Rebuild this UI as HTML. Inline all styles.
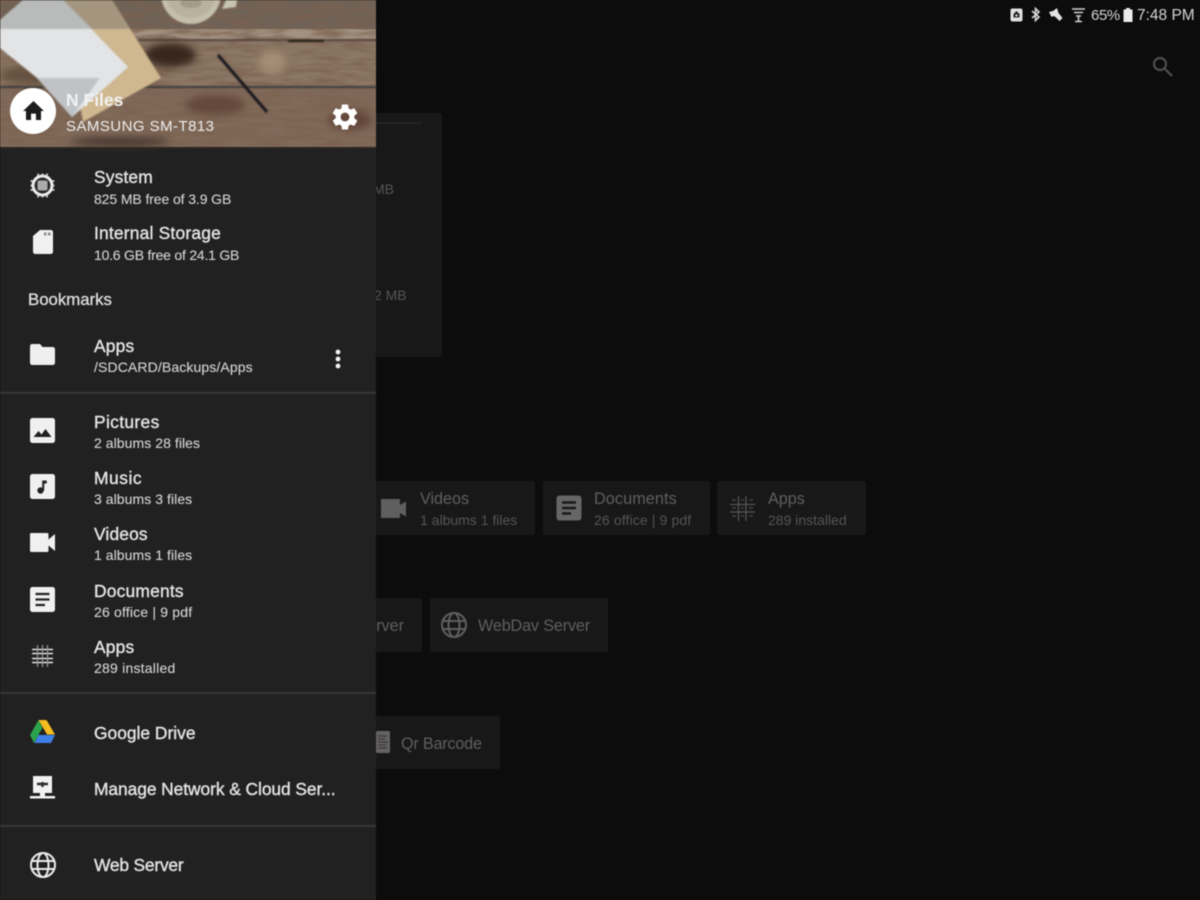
<!DOCTYPE html>
<html><head><meta charset="utf-8">
<style>
html,body{margin:0;padding:0;width:1200px;height:900px;overflow:hidden;background:#0c0c0c;font-family:"Liberation Sans",sans-serif}
#root{position:absolute;left:0;top:0;width:1200px;height:900px;filter:blur(.55px)}
.abs{position:absolute}
.card{position:absolute;background:#181818;border-radius:2px}
.dt{position:absolute;color:#5f5f5f;white-space:nowrap;font-size:16.2px;letter-spacing:-.02px}
.ds{position:absolute;color:#555;white-space:nowrap;font-size:14px}
#drawer{position:absolute;left:0;top:0;width:376px;height:900px;background:#212121;overflow:hidden}
.t{position:absolute;left:94px;color:#e4e4e4;font-size:17.4px;white-space:nowrap;font-weight:400;-webkit-text-stroke:.38px #e4e4e4}
.s{position:absolute;left:94px;color:#d4d4d4;font-size:14px;white-space:nowrap;-webkit-text-stroke:.12px #d4d4d4}
.hr{position:absolute;left:0;width:376px;height:2px;background:#373737}
svg{position:absolute;overflow:visible}
</style></head><body>
<div id="root">

<!-- background content -->
<div class="card" style="left:360px;top:113px;width:82px;height:244px"></div>
<div class="abs" style="left:376px;top:122px;width:46px;height:2px;background:#252525"></div>
<div class="dt" style="left:373px;top:181px;font-size:14px;color:#565656">MB</div>
<div class="dt" style="left:374px;top:287px;font-size:14px;color:#565656">2 MB</div>

<div class="card" style="left:360px;top:481px;width:175px;height:54px"></div>
<div class="card" style="left:543px;top:481px;width:167px;height:54px"></div>
<div class="card" style="left:717px;top:481px;width:149px;height:54px"></div>
<svg style="left:380px;top:498px" width="28" height="22" viewBox="0 0 28 22"><path d="M1 1h19v6l6-3.500v15l-6-3.500v5H1z" fill="#5f5f5f"/></svg>
<div class="dt" style="left:420px;top:490px">Videos</div>
<div class="ds" style="left:420px;top:512px">1 albums 1 files</div>
<svg style="left:556px;top:495px" width="26" height="26" viewBox="0 0 26 26"><rect x="0.500" y="0.500" width="25" height="25" rx="3" fill="#666"/><path d="M6 7.500h14M6 13h14M6 18.500h9" stroke="#191919" stroke-width="2.400"/></svg>
<div class="dt" style="left:594px;top:490px;letter-spacing:.1px">Documents</div>
<div class="ds" style="left:594px;top:512px;letter-spacing:.12px">26 office | 9 pdf</div>
<svg style="left:730px;top:496px" width="25" height="25" viewBox="0 0 25 25" stroke="#555" stroke-width="1.300" fill="none"><path d="M8.500 0v25M16 0v25M0 8.500h25M0 16h25"/><path d="M2 4h4M11 4h3M19 4h4M2 12h4M11 12h3M19 12h4M2 20h4M11 20h3M19 20h4" stroke-width="1.600" stroke="#444"/></svg>
<div class="dt" style="left:768px;top:490px">Apps</div>
<div class="ds" style="left:768px;top:512px">289 installed</div>

<div class="card" style="left:360px;top:598px;width:62px;height:54px"></div>
<div class="card" style="left:430px;top:598px;width:178px;height:54px"></div>
<div class="dt" style="left:376px;top:617px;width:28px;overflow:hidden;direction:rtl">rver</div>
<svg style="left:441px;top:612px" width="26" height="26" viewBox="0 0 26 26" fill="none" stroke="#5f5f5f" stroke-width="2"><circle cx="13" cy="13" r="12"/><ellipse cx="13" cy="13" rx="5.500" ry="12"/><path d="M2 9h22M2 17h22"/></svg>
<div class="dt" style="left:478px;top:617px;letter-spacing:-.15px">WebDav Server</div>

<div class="card" style="left:360px;top:716px;width:140px;height:53px"></div>
<svg style="left:376px;top:731px" width="14" height="22" viewBox="0 0 14 22"><rect width="14" height="22" rx="1.500" fill="#636363"/><path d="M2 5h9M2 8h7M2 11h10M2 14h8M2 17h9" stroke="#443c3c" stroke-width="1.500"/></svg>
<div class="dt" style="left:401px;top:735px;letter-spacing:-.2px">Qr Barcode</div>

<!-- status bar -->
<svg style="left:1010px;top:8px" width="14" height="14" viewBox="0 0 14 14"><rect x="0.500" y="0.500" width="12" height="13" rx="2" fill="#e0e0e0"/><path d="M6.500 3l3 3v3.500h-6V6z" fill="#222"/><rect x="5.500" y="6.500" width="2" height="2" fill="#e0e0e0"/></svg>
<svg style="left:1030px;top:7px" width="12" height="15" viewBox="0 0 12 15" fill="none" stroke="#d8d8d8" stroke-width="1.600"><path d="M2 4l7 6-3.500 3.500v-12L9 5l-7 6"/></svg>
<svg style="left:1048px;top:7px" width="16" height="15" viewBox="0 0 16 15"><path d="M1 5l4-1 4-3 1.500 5 4 5-3 3-4-4-2-1-2 1z" fill="#e2e2e2"/></svg>
<svg style="left:1071px;top:7px" width="15" height="16" viewBox="0 0 15 16" fill="none" stroke="#cfcfcf" stroke-width="1.500"><path d="M1 2h13M3 5.500h9M5 9h5"/><path d="M7.500 9v5M4 14.500h7"/></svg>
<div class="abs" style="left:1091px;top:7px;color:#d4d4d4;font-size:15px;white-space:nowrap;letter-spacing:-.4px">65%</div>
<svg style="left:1123px;top:8px" width="10" height="14" viewBox="0 0 10 14"><path d="M3 0h4v1.500h2.500V14H.5V1.500H3z" fill="#ececec"/></svg>
<div class="abs" style="left:1137px;top:7px;color:#d4d4d4;font-size:15.500px;white-space:nowrap">7:48 PM</div>
<svg style="left:1152px;top:56px" width="21" height="21" viewBox="0 0 21 21" fill="none" stroke="#4f4f4f" stroke-width="2.200"><circle cx="8" cy="8" r="6"/><path d="M12.500 12.500l7.500 7.500"/></svg>

<!-- drawer -->
<div id="drawer">
  <!-- header image -->
  <svg style="left:0;top:0" width="376" height="149" viewBox="0 0 376 149">
    <defs>
      <filter id="b" x="-10%" y="-10%" width="120%" height="120%"><feGaussianBlur stdDeviation=".8"/></filter>
      <filter id="b4" x="-30%" y="-30%" width="160%" height="160%"><feGaussianBlur stdDeviation="4"/></filter>
      <filter id="n" x="0" y="0" width="100%" height="100%"><feTurbulence type="fractalNoise" baseFrequency=".035 .22" numOctaves="4" seed="4"/><feColorMatrix values="0 0 0 0 .2  0 0 0 0 .12  0 0 0 0 .08  2.200 0 0 0 -.75"/></filter>
    </defs>
    <rect width="376" height="149" fill="#7f6a59"/>
    <rect y="0" width="376" height="29" fill="#6f6256"/>
    <rect y="29" width="376" height="11" fill="#a39280"/>
    <rect y="40" width="376" height="47" fill="#8c7866"/>
    <rect y="88" width="376" height="61" fill="#806a59"/>
    <rect width="376" height="149" filter="url(#n)" opacity=".85"/>
    <g filter="url(#b4)">
      <ellipse cx="170" cy="55" rx="26" ry="12" fill="#38251c"/>
      <ellipse cx="272" cy="62" rx="14" ry="12" fill="#a38e74"/>
      <ellipse cx="40" cy="75" rx="40" ry="10" fill="#66513f"/>
      <ellipse cx="215" cy="105" rx="30" ry="10" fill="#654a3b"/>
      <ellipse cx="350" cy="120" rx="22" ry="10" fill="#62473a"/>
      <ellipse cx="120" cy="142" rx="50" ry="5" fill="#4a3931"/>
    </g>
    <g filter="url(#b)">
      <path d="M135 40H376" stroke="#42332a" stroke-width="1.500"/>
      <path d="M288 41h36" stroke="#241a15" stroke-width="2"/>
      <path d="M0 87H376" stroke="#3b3a3a" stroke-width="2"/>
      <path d="M62 0H112L161 78 83 122z" fill="#cfb88f"/>
      <path d="M62 0H112L130 29H88z" fill="#a4957f"/>
      <path d="M0 20L23 0H63L128 67 72 117 37 78 0 48z" fill="#e2e4e6"/>
      <path d="M0 20L23 0H63L92 29H0z" fill="#b8bbb9"/>
      <path d="M37 78H100L72 117z" fill="#c0c3c6"/>
      <path d="M218 55L267 112" stroke="#15161a" stroke-width="3"/>
      <path d="M226 0H237L236 7 222 9z" fill="#c9c5b4"/>
      <circle cx="191" cy="-6" r="30" fill="#c4bfaa"/>
      <circle cx="191" cy="-7" r="25" fill="#b9b29c"/>
      <ellipse cx="191" cy="3" rx="11" ry="5" fill="#a39c87"/>
    </g>
    <rect y="147" width="376" height="2" fill="#2a2622"/>
  </svg>
  <div class="abs" style="left:10px;top:88px;width:46px;height:46px;border-radius:50%;background:#fff"></div>
  <svg style="left:23px;top:101px" width="21" height="19" viewBox="0 0 23 21"><path d="M11.500 0L23 11h-3.200v10h-5.600v-7H8.800v7H3.200V11H0z" fill="#1c1c1c"/></svg>
  <div class="abs" style="left:66px;top:90px;color:#f2f2f2;font-size:17.500px;font-weight:700;white-space:nowrap">N Files</div>
  <div class="abs" style="left:66px;top:118px;color:#eee;font-size:15px;white-space:nowrap;letter-spacing:.45px">SAMSUNG SM-T813</div>
  <svg style="left:330px;top:102px" width="30" height="30" viewBox="0 0 24 24"><path fill="#fff" fill-rule="evenodd" d="M19.430 12.980c.04-.32.070-.64.070-.98s-.03-.66-.07-.98l2.110-1.650c.19-.15.240-.42.120-.64l-2-3.460c-.12-.22-.39-.30-.61-.22l-2.490 1c-.52-.40-1.080-.73-1.690-.98l-.38-2.650C14.460 2.180 14.250 2 14 2h-4c-.25 0-.46.180-.49.420l-.38 2.650c-.61.250-1.170.590-1.690.980l-2.490-1c-.23-.090-.49 0-.61.220l-2 3.460c-.13.220-.07.490.12.640l2.110 1.650c-.04.320-.07.650-.07.980s.03.660.07.980l-2.110 1.650c-.19.150-.24.420-.12.640l2 3.460c.12.220.39.300.61.220l2.490-1c.52.400 1.080.730 1.690.980l.38 2.650c.03.240.24.420.49.420h4c.25 0 .46-.18.490-.42l.38-2.650c.61-.25 1.170-.59 1.690-.98l2.490 1c.23.090.49 0 .61-.22l2-3.460c.12-.22.07-.49-.12-.64l-2.110-1.650zM12 15.500c-1.930 0-3.500-1.570-3.500-3.500s1.570-3.500 3.500-3.500 3.500 1.570 3.500 3.500-1.570 3.500-3.500 3.500z"/></svg>

  <!-- System -->
  <svg style="left:30px;top:173px" width="25" height="25" viewBox="0 0 25 25"><circle cx="12.500" cy="12.500" r="9.500" fill="#2a2a2a" stroke="#ececec" stroke-width="3"/><rect x="7.500" y="7.500" width="10" height="10" rx="2" fill="#ababab"/><path d="M8 0.500v3M12.500 0.500v3M17 0.500v3M8 21.500v3M12.500 21.500v3M17 21.500v3M0.500 8h3M0.500 12.500h3M0.500 17h3M21.500 8h3M21.500 12.500h3M21.500 17h3" stroke="#e0e0e0" stroke-width="1.500"/></svg>
  <div class="t" style="top:167px;letter-spacing:.15px">System</div>
  <div class="s" style="top:191px;letter-spacing:-.1px">825 MB free of 3.9 GB</div>

  <!-- Internal Storage -->
  <svg style="left:33px;top:230px" width="20" height="24" viewBox="0 0 20 24"><path d="M7 0H17.500Q20 0 20 2.500V21.500Q20 24 17.500 24H2.500Q0 24 0 21.500V6z" fill="#f0f0f0"/><path d="M11 2.500h2.500v3H11zM15 2.500h2.500v3H15z" fill="#8a8a8a"/></svg>
  <div class="t" style="top:223px;letter-spacing:.2px">Internal Storage</div>
  <div class="s" style="top:247px;letter-spacing:-.22px">10.6 GB free of 24.1 GB</div>

  <div class="abs" style="left:28px;top:290px;color:#e2e2e2;font-size:16.800px;white-space:nowrap;-webkit-text-stroke:.25px #e2e2e2">Bookmarks</div>

  <!-- Apps bookmark -->
  <svg style="left:30px;top:344px" width="25" height="21" viewBox="0 0 25 21"><path d="M2.500 0H10l2.500 3H22.500Q25 3 25 5.500V18.500Q25 21 22.500 21H2.500Q0 21 0 18.500V2.500Q0 0 2.500 0z" fill="#efefef"/></svg>
  <div class="t" style="top:336px;letter-spacing:.2px">Apps</div>
  <div class="s" style="top:359px;letter-spacing:.12px">/SDCARD/Backups/Apps</div>
  <svg style="left:334px;top:349px" width="8" height="21" viewBox="0 0 8 21" fill="#f2f2f2"><circle cx="4" cy="3" r="2.400"/><circle cx="4" cy="10" r="2.400"/><circle cx="4" cy="17" r="2.400"/></svg>

  <div class="hr" style="top:392px"></div>

  <!-- Pictures -->
  <svg style="left:30px;top:418px" width="25" height="25" viewBox="0 0 25 25"><rect width="25" height="25" rx="2.500" fill="#f0f0f0"/><path d="M3.500 19l5-6 3 3.500 4-5.500 6 8z" fill="#202020"/></svg>
  <div class="t" style="top:412px;letter-spacing:.35px">Pictures</div>
  <div class="s" style="top:435px;letter-spacing:.06px">2 albums 28 files</div>

  <!-- Music -->
  <svg style="left:30px;top:474px" width="25" height="25" viewBox="0 0 25 25"><rect width="25" height="25" rx="2.500" fill="#f0f0f0"/><circle cx="10.500" cy="16.500" r="3.200" fill="#202020"/><path d="M12.200 16.500V6.500h4.500v3h-2.500v7z" fill="#202020"/></svg>
  <div class="t" style="top:468px;letter-spacing:.55px">Music</div>
  <div class="s" style="top:491px;letter-spacing:.06px">3 albums 3 files</div>

  <!-- Videos -->
  <svg style="left:30px;top:533px" width="25" height="19" viewBox="0 0 25 19"><path d="M1.500 0H17Q18.500 0 18.500 1.500V6.500L25 1V18L18.500 12.500V17.500Q18.500 19 17 19H1.500Q0 19 0 17.500V1.500Q0 0 1.500 0z" fill="#f0f0f0"/></svg>
  <div class="t" style="top:524px;letter-spacing:.15px">Videos</div>
  <div class="s" style="top:547px;letter-spacing:.06px">1 albums 1 files</div>

  <!-- Documents -->
  <svg style="left:30px;top:587px" width="25" height="25" viewBox="0 0 25 25"><rect width="25" height="25" rx="2.500" fill="#f0f0f0"/><path d="M5.500 7h14M5.500 12.500h14M5.500 18h9.500" stroke="#222" stroke-width="2.200"/></svg>
  <div class="t" style="top:581px;letter-spacing:.2px">Documents</div>
  <div class="s" style="top:604px;letter-spacing:.18px">26 office | 9 pdf</div>

  <!-- Apps -->
  <svg style="left:31px;top:644px" width="23" height="24" viewBox="0 0 23 24" stroke="#e2e2e2" fill="none"><path d="M1 5.500h21M1 9.500h21M1 14.500h21M1 18.500h21" stroke-width="1.600"/><path d="M6.500 1v22M11.500 1v22M16.500 1v22" stroke-width="1.200" stroke="#9a9a9a"/></svg>
  <div class="t" style="top:637px;letter-spacing:.2px">Apps</div>
  <div class="s" style="top:660px;letter-spacing:.22px">289 installed</div>

  <div class="hr" style="top:692px"></div>

  <!-- Google Drive -->
  <svg style="left:30px;top:720px" width="25" height="23" viewBox="0 0 25 23">
    <path d="M8.500 0H16.500L25 14.500H17z" fill="#f5bd1f"/>
    <path d="M8.500 0L0 15 4 23 12.500 8z" fill="#2ba24c"/>
    <path d="M4.500 23H21L25 15H8.500z" fill="#3f7fe8"/>
    <path d="M12.500 8L8.500 15H17z" fill="#212121"/>
  </svg>
  <div class="t" style="top:723px">Google Drive</div>

  <!-- Manage Network -->
  <svg style="left:30px;top:776px" width="25" height="25" viewBox="0 0 25 25"><path d="M3 0h19v17H15v3h10v2.500H0V20h10v-3H3z" fill="#f2f2f2"/><path d="M7 8h11M12.500 6v5" stroke="#2a2a2a" stroke-width="2.400"/></svg>
  <div class="t" style="top:779px;letter-spacing:-.07px">Manage Network &amp; Cloud Ser...</div>

  <div class="hr" style="top:825px"></div>

  <!-- Web Server -->
  <svg style="left:30px;top:852px" width="26" height="26" viewBox="0 0 26 26" fill="none" stroke="#ececec" stroke-width="2"><circle cx="13" cy="13" r="12"/><ellipse cx="13" cy="13" rx="5.500" ry="12"/><path d="M2 9h22M2 17h22"/></svg>
  <div class="t" style="top:855px;letter-spacing:-.2px">Web Server</div>
</div>

</div>
</body></html>
